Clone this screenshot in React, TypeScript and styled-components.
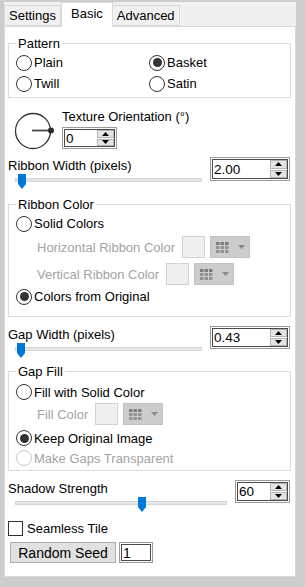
import React from 'react';
import styled, { createGlobalStyle } from 'styled-components';

const GlobalStyle = createGlobalStyle`
	html, body {
		margin: 0;
		padding: 0;
		background: #cdcdcd;
	}
	body {
		font-family: "Liberation Sans", Arial, sans-serif;
		font-size: 13px;
		color: #000;
	}
`;

const Window = styled.div`
	width: 305px;
	height: 587px;
	box-sizing: border-box;
	padding: 2px 9px 10px 4px;
	background: #cdcdcd;
	display: flex;
	flex-direction: column;
`;

const TabStrip = styled.div`
	height: 24px;
	flex-shrink: 0;
	background: #f0f0f0;
	display: flex;
	align-items: flex-end;
	position: relative;
	z-index: 1;
`;

const Tab = styled.div<{ $active?: boolean }>`
	box-sizing: border-box;
	height: ${(p) => (p.$active ? 25 : 21)}px;
	margin-bottom: ${(p) => (p.$active ? -1 : 0)}px;
	padding: 0 ${(p) => (p.$active ? 9 : 4)}px;
	line-height: ${(p) => (p.$active ? 21 : 19)}px;
	border: 1px solid #d9d9d9;
	border-bottom: ${(p) => (p.$active ? 'none' : '1px solid #d9d9d9')};
	border-left: ${(p) => (p.$active ? '1px solid #d9d9d9' : 'none')};
	background: ${(p) => (p.$active ? '#fff' : '#f0f0f0')};
	&:first-child {
		border-left: 1px solid #d9d9d9;
	}
`;

const Panel = styled.div`
	flex: 1;
	background: #fff;
	border: 1px solid #d9d9d9;
	padding: 0 4px 0 3px;
	display: flex;
	flex-direction: column;
`;

const Group = styled.fieldset<{ $top: number; $pad: string }>`
	margin: ${(p) => p.$top}px 0 0 0;
	padding: ${(p) => p.$pad};
	border: 1px solid #dcdcdc;
	min-width: 0;
`;

const Legend = styled.legend`
	padding: 0 2px;
	line-height: 15px;
`;

const RadioGrid = styled.div`
	display: grid;
	grid-template-columns: 133px 1fr;
`;

const RadioRow = styled.label<{ $h?: number; $top?: number; $disabled?: boolean }>`
	display: flex;
	align-items: center;
	gap: 2px;
	height: ${(p) => p.$h ?? 21}px;
	margin-top: ${(p) => p.$top ?? 0}px;
	color: ${(p) => (p.$disabled ? '#a3a3a3' : '#000')};
	white-space: nowrap;
`;

const RadioCircle = styled.span<{ $checked?: boolean; $disabled?: boolean }>`
	box-sizing: border-box;
	width: 16px;
	height: 16px;
	border-radius: 50%;
	border: 1px solid ${(p) => (p.$disabled ? '#c6c6c6' : '#333')};
	background: #fff;
	display: flex;
	align-items: center;
	justify-content: center;
	flex-shrink: 0;
	&::after {
		content: '';
		width: 9px;
		height: 9px;
		border-radius: 50%;
		background: ${(p) => (p.$checked ? '#333' : 'transparent')};
	}
`;

const TextureRow = styled.div`
	display: flex;
	margin-top: 11px;
	gap: 8px;
	padding-left: 6px;
`;

const Dial = styled.svg`
	width: 40px;
	height: 40px;
	margin-top: 2px;
	flex-shrink: 0;
`;

const TextureCol = styled.div`
	display: flex;
	flex-direction: column;
	align-items: flex-start;
	gap: 3px;
`;

const Label = styled.div`
	line-height: 15px;
	white-space: nowrap;
`;

const SliderBlock = styled.div<{ $top: number }>`
	display: grid;
	grid-template-columns: 1fr auto;
	margin-top: ${(p) => p.$top}px;
`;

const BlockLabel = styled(Label)`
	grid-column: 1;
	margin-top: 1px;
`;

const SpinCell = styled.div`
	grid-column: 2;
	grid-row: 1 / span 2;
	align-self: start;
	margin-right: 1px;
`;

const SliderWrap = styled.div<{ $w: number }>`
	grid-column: 1;
	position: relative;
	width: ${(p) => p.$w}px;
	height: 16px;
	margin-left: 7px;
`;

const Track = styled.div`
	position: absolute;
	left: 0;
	right: 0;
	top: 5px;
	height: 4px;
	box-sizing: border-box;
	background: #e7e7e7;
	border: 1px solid #d6d6d6;
`;

const Thumb = styled.svg`
	position: absolute;
	top: 1px;
	width: 8px;
	height: 15px;
`;

const SpinBox = styled.div<{ $w: number; $h: number }>`
	box-sizing: border-box;
	width: ${(p) => p.$w}px;
	height: ${(p) => p.$h}px;
	border: 1px solid #9a9a9a;
	box-shadow: inset 0 0 0 1px #fff, inset 0 0 0 2px #4a4a4a;
	padding: 2px;
	display: flex;
	background: #fff;
`;

const SpinValue = styled.div`
	flex: 1;
	padding-left: 1px;
	display: flex;
	align-items: center;
	font-size: 13.5px;
`;

const SpinButtons = styled.div`
	width: 17px;
	display: flex;
	flex-direction: column;
	gap: 1px;
`;

const SpinBtn = styled.div`
	flex: 1;
	box-sizing: border-box;
	background: #e5e5e5;
	border: 1px solid #b4b4b4;
	display: flex;
	align-items: center;
	justify-content: center;
`;

const ColorRow = styled.div<{ $top: number }>`
	display: flex;
	align-items: center;
	height: 22px;
	margin-top: ${(p) => p.$top}px;
	padding-left: 21px;
	color: #a3a3a3;
	white-space: nowrap;
`;

const Swatch = styled.div`
	box-sizing: border-box;
	width: 23px;
	height: 22px;
	margin-left: 7px;
	border: 1px solid #d2d2d2;
	background: #f0f0f0;
`;

const PickerButton = styled.div`
	box-sizing: border-box;
	width: 40px;
	height: 22px;
	margin-left: 5px;
	background: #cccccc;
	border: 1px solid #c2c2c2;
	display: flex;
	align-items: center;
	padding-left: 5px;
	gap: 9px;
`;

const CheckRow = styled.label`
	display: flex;
	align-items: center;
	gap: 4px;
	height: 21px;
	margin-top: 6px;
`;

const CheckBox = styled.span`
	box-sizing: border-box;
	width: 15px;
	height: 15px;
	border: 1px solid #333;
	background: #fff;
`;

const SeedRow = styled.div`
	display: flex;
	align-items: center;
	margin-top: 3px;
	padding-left: 2px;
	gap: 3px;
`;

const Button = styled.div`
	box-sizing: border-box;
	width: 106px;
	height: 21px;
	background: #e1e1e1;
	border: 1px solid #adadad;
	display: flex;
	align-items: center;
	justify-content: center;
	font-size: 14px;
`;

const SeedInput = styled(SpinBox)`
	padding-left: 3px;
	align-items: center;
	font-size: 14px;
`;

const Arrow = ({ up }: { up?: boolean }) => (
	<svg width='7' height='4' viewBox='0 0 7 4'>
		<polygon points={up ? '0,4 7,4 3.5,0' : '0,0 7,0 3.5,4'} fill='#000' />
	</svg>
);

const Spin = ({ value, w, h }: { value: string; w: number; h: number }) => (
	<SpinBox $w={w} $h={h}>
		<SpinValue>{value}</SpinValue>
		<SpinButtons>
			<SpinBtn>
				<Arrow up />
			</SpinBtn>
			<SpinBtn>
				<Arrow />
			</SpinBtn>
		</SpinButtons>
	</SpinBox>
);

const Slider = ({ w, frac }: { w: number; frac: number }) => (
	<SliderWrap $w={w}>
		<Track />
		<Thumb viewBox='0 0 8 15' style={{ left: Math.round(frac * (w - 8)) + 1 }}>
			<path d='M0 0 H8 V10 L4 15 L0 10 Z' fill='#0078d7' />
		</Thumb>
	</SliderWrap>
);

const Picker = () => (
	<PickerButton>
		<svg width='13' height='11' viewBox='0 0 13 11'>
			{[0, 1, 2].map((r) =>
				[0, 1, 2].map((c) => (
					<rect
						key={`${r}${c}`}
						x={c * 4.5}
						y={r * 4}
						width='3.5'
						height='3'
						fill={r === 0 ? '#7d7d7d' : '#939393'}
					/>
				))
			)}
		</svg>
		<svg width='7' height='4' viewBox='0 0 7 4'>
			<polygon points='0,0 7,0 3.5,4' fill='#8a8a8a' />
		</svg>
	</PickerButton>
);

const Radio = ({
	label,
	checked,
	disabled,
	h,
	top,
}: {
	label: string;
	checked?: boolean;
	disabled?: boolean;
	h?: number;
	top?: number;
}) => (
	<RadioRow $h={h} $top={top} $disabled={disabled}>
		<RadioCircle $checked={checked} $disabled={disabled} />
		{label}
	</RadioRow>
);

const App: React.FC = () => {
	return (
		<Window>
			<GlobalStyle />
			<TabStrip>
				<Tab>Settings</Tab>
				<Tab $active>Basic</Tab>
				<Tab>Advanced</Tab>
			</TabStrip>
			<Panel>
				<Group $top={9} $pad='1px 7px 3px 7px'>
					<Legend>Pattern</Legend>
					<RadioGrid>
						<Radio label='Plain' />
						<Radio label='Basket' checked />
						<Radio label='Twill' />
						<Radio label='Satin' />
					</RadioGrid>
				</Group>

				<TextureRow>
					<Dial viewBox='0 0 40 40'>
						<circle cx='19' cy='20' r='17.5' fill='#fff' stroke='#333' strokeWidth='1.3' />
						<line x1='18' y1='19.5' x2='37' y2='19.5' stroke='#444' strokeWidth='1.8' />
						<circle cx='37' cy='19.5' r='3' fill='#2b2b2b' />
					</Dial>
					<TextureCol>
						<Label>Texture Orientation (°)</Label>
						<Spin value='0' w={55} h={22} />
					</TextureCol>
				</TextureRow>

				<SliderBlock $top={6}>
					<BlockLabel>Ribbon Width (pixels)</BlockLabel>
					<SpinCell>
						<Spin value='2.00' w={80} h={24} />
					</SpinCell>
					<Slider w={187} frac={0.01} />
				</SliderBlock>

				<Group $top={8} $pad='1px 7px 9px 7px'>
					<Legend>Ribbon Color</Legend>
					<Radio label='Solid Colors' />
					<ColorRow $top={2}>
						Horizontal Ribbon Color
						<Swatch />
						<Picker />
					</ColorRow>
					<ColorRow $top={5}>
						Vertical Ribbon Color
						<Swatch />
						<Picker />
					</ColorRow>
					<Radio label='Colors from Original' checked top={1} />
				</Group>

				<SliderBlock $top={9}>
					<BlockLabel>Gap Width (pixels)</BlockLabel>
					<SpinCell>
						<Spin value='0.43' w={80} h={23} />
					</SpinCell>
					<Slider w={187} frac={0.005} />
				</SliderBlock>

				<Group $top={6} $pad='3px 7px 2px 7px'>
					<Legend>Gap Fill</Legend>
					<Radio label='Fill with Solid Color' h={20} />
					<ColorRow $top={1}>
						Fill Color
						<Swatch />
						<Picker />
					</ColorRow>
					<Radio label='Keep Original Image' checked h={20} top={3} />
					<Radio label='Make Gaps Transparent' disabled h={20} />
				</Group>

				<SliderBlock $top={9}>
					<BlockLabel>Shadow Strength</BlockLabel>
					<SpinCell>
						<Spin value='60' w={55} h={23} />
					</SpinCell>
					<Slider w={212} frac={0.6} />
				</SliderBlock>

				<CheckRow>
					<CheckBox />
					Seamless Tile
				</CheckRow>

				<SeedRow>
					<Button>Random Seed</Button>
					<SeedInput $w={34} $h={21}>1</SeedInput>
				</SeedRow>
			</Panel>
		</Window>
	);
};

export default App;
